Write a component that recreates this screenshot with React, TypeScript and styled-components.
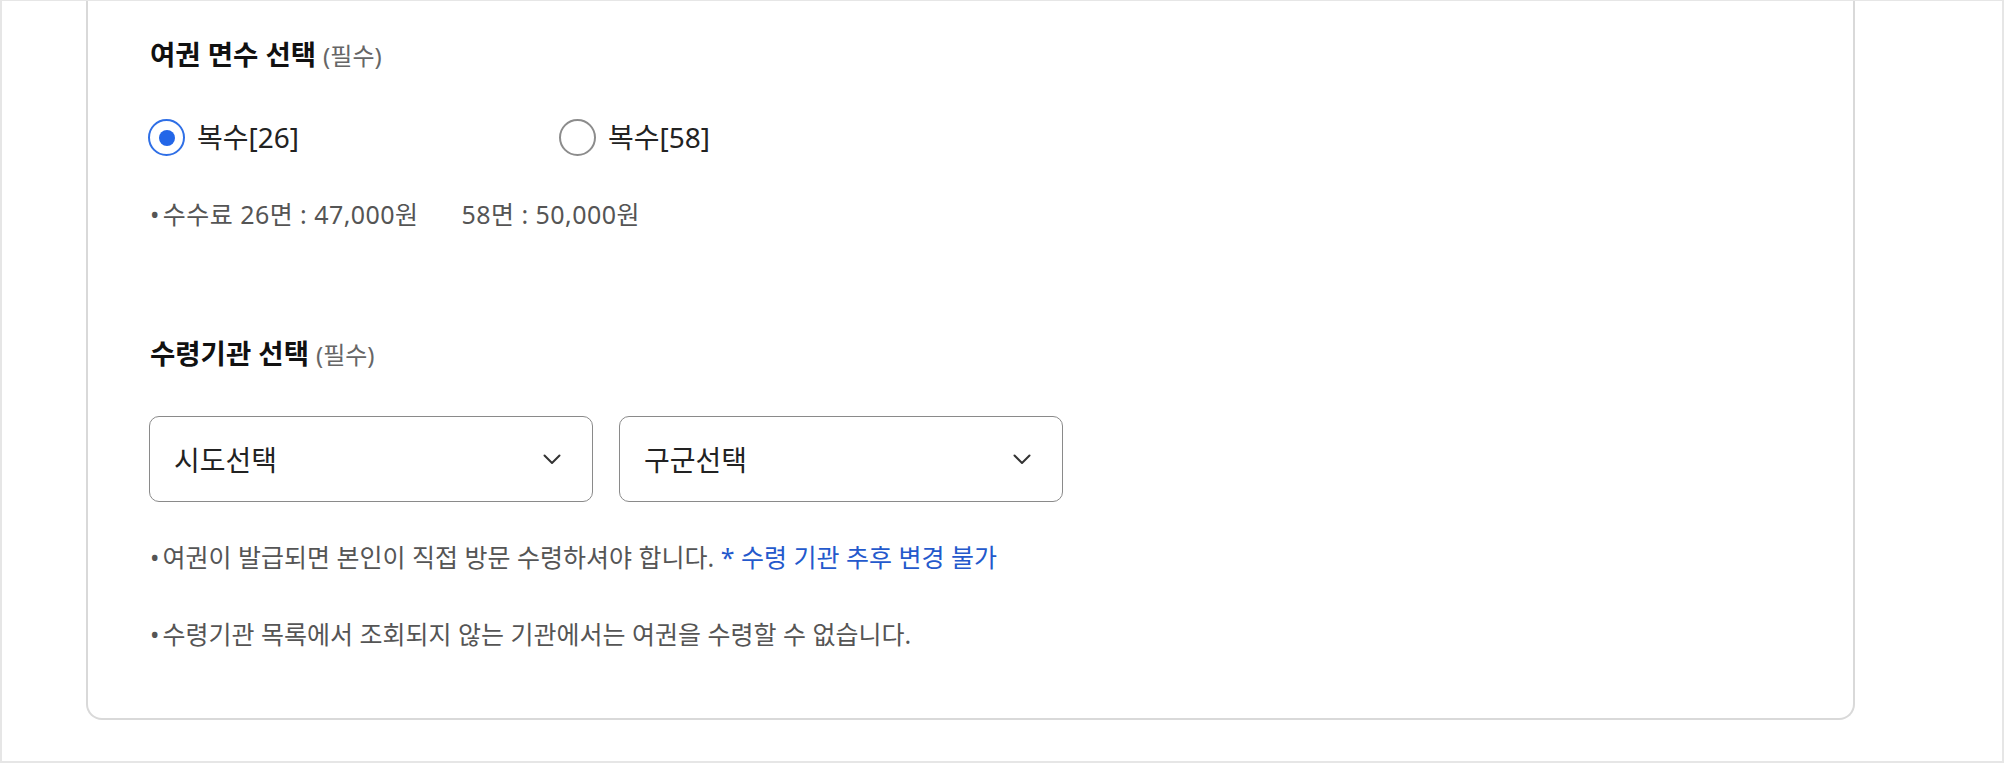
import React, { useState } from "react";
import styled, { createGlobalStyle } from "styled-components";

const GlobalStyle = createGlobalStyle`
  html, body { margin: 0; padding: 0; background: #ffffff; }
  body {
    font-family: "Noto Sans", "Noto Sans CJK KR", Roboto, sans-serif;
    color: #222;
    -webkit-font-smoothing: antialiased;
  }
  * { box-sizing: border-box; }
`;

const Frame = styled.div`
  width: 2004px;
  height: 763px;
  border: 2px solid #e6e6e6;
  border-top-width: 1px;
  padding: 0 147px 41px 84px;
  display: flex;
  flex-direction: column;
`;

const Card = styled.section`
  flex: 1;
  border: 2px solid #d9d9d9;
  border-top: none;
  border-radius: 0 0 16px 16px;
  padding: 36px 62px 0 62px;
  display: flex;
  flex-direction: column;
`;

const SectionTitle = styled.h2<{ $mt?: number }>`
  margin: ${(p) => p.$mt ?? 0}px 0 0 0;
  font-size: 27.5px;
  line-height: 36px;
  font-weight: 700;
  color: #111;
`;

const Required = styled.span`
  font-size: 24px;
  font-weight: 400;
  color: #666;
  margin-left: 7px;
`;

const RadioRow = styled.div`
  margin-top: 45px;
  display: grid;
  grid-template-columns: 411px auto;
  align-items: center;
`;

const RadioOption = styled.label`
  display: flex;
  align-items: center;
  gap: 12px;
  cursor: pointer;
  font-size: 28px;
  line-height: 37px;
  color: #222;
  margin-left: -2px;
`;

const RadioCircle = styled.span<{ $checked: boolean }>`
  width: 37px;
  height: 37px;
  border-radius: 50%;
  border: 2px solid ${(p) => (p.$checked ? "#2f6fe6" : "#8c8c8c")};
  display: flex;
  align-items: center;
  justify-content: center;
  flex-shrink: 0;
  &::after {
    content: "";
    width: 16px;
    height: 16px;
    border-radius: 50%;
    background: ${(p) => (p.$checked ? "#2366e8" : "transparent")};
  }
`;

const Note = styled.p<{ $mt: number; $tracking?: number }>`
  margin: ${(p) => p.$mt}px 0 0 0;
  font-size: 25px;
  line-height: 34px;
  color: #555;
  letter-spacing: ${(p) => p.$tracking ?? 0}px;
`;

const Bullet = styled.span`
  margin-right: 3px;
`;

const Spaced = styled.span`
  margin-left: 43px;
`;

const Highlight = styled.span`
  color: #2459cc;
`;

const SelectRow = styled.div`
  margin-top: 43px;
  display: flex;
  gap: 26px;
  margin-left: -1px;
`;

const SelectBox = styled.button`
  width: 444px;
  height: 86px;
  border: 1.5px solid #8a8a8a;
  border-radius: 10px;
  background: #fff;
  padding: 0 31px 0 24px;
  display: flex;
  align-items: center;
  justify-content: space-between;
  font-family: inherit;
  font-size: 28px;
  color: #222;
  cursor: pointer;
`;

const Chevron = () => (
  <svg width="18" height="11" viewBox="0 0 18 11" fill="none">
    <polyline points="1.5,1.5 9,9 16.5,1.5" stroke="#333" strokeWidth="2" strokeLinecap="round" strokeLinejoin="round" />
  </svg>
);

export default function App() {
  const [count, setCount] = useState<26 | 58>(26);
  return (
    <>
      <GlobalStyle />
      <Frame>
        <Card>
          <SectionTitle>
            여권 면수 선택<Required>(필수)</Required>
          </SectionTitle>
          <RadioRow role="radiogroup">
            {[26, 58].map((n) => (
              <RadioOption key={n} onClick={() => setCount(n as 26 | 58)}>
                <RadioCircle $checked={count === n} role="radio" aria-checked={count === n} />
                복수[{n}]
              </RadioOption>
            ))}
          </RadioRow>
          <Note $mt={41} $tracking={0.45}>
            <Bullet>•</Bullet>수수료 26면 : 47,000원<Spaced>58면 : 50,000원</Spaced>
          </Note>

          <SectionTitle $mt={105}>
            수령기관 선택<Required>(필수)</Required>
          </SectionTitle>
          <SelectRow>
            <SelectBox type="button">
              시도선택
              <Chevron />
            </SelectBox>
            <SelectBox type="button">
              구군선택
              <Chevron />
            </SelectBox>
          </SelectRow>
          <Note $mt={38}>
            <Bullet>•</Bullet>여권이 발급되면 본인이 직접 방문 수령하셔야 합니다.{" "}
            <Highlight>* 수령 기관 추후 변경 불가</Highlight>
          </Note>
          <Note $mt={43}>
            <Bullet>•</Bullet>수령기관 목록에서 조회되지 않는 기관에서는 여권을 수령할 수 없습니다.
          </Note>
        </Card>
      </Frame>
    </>
  );
}
